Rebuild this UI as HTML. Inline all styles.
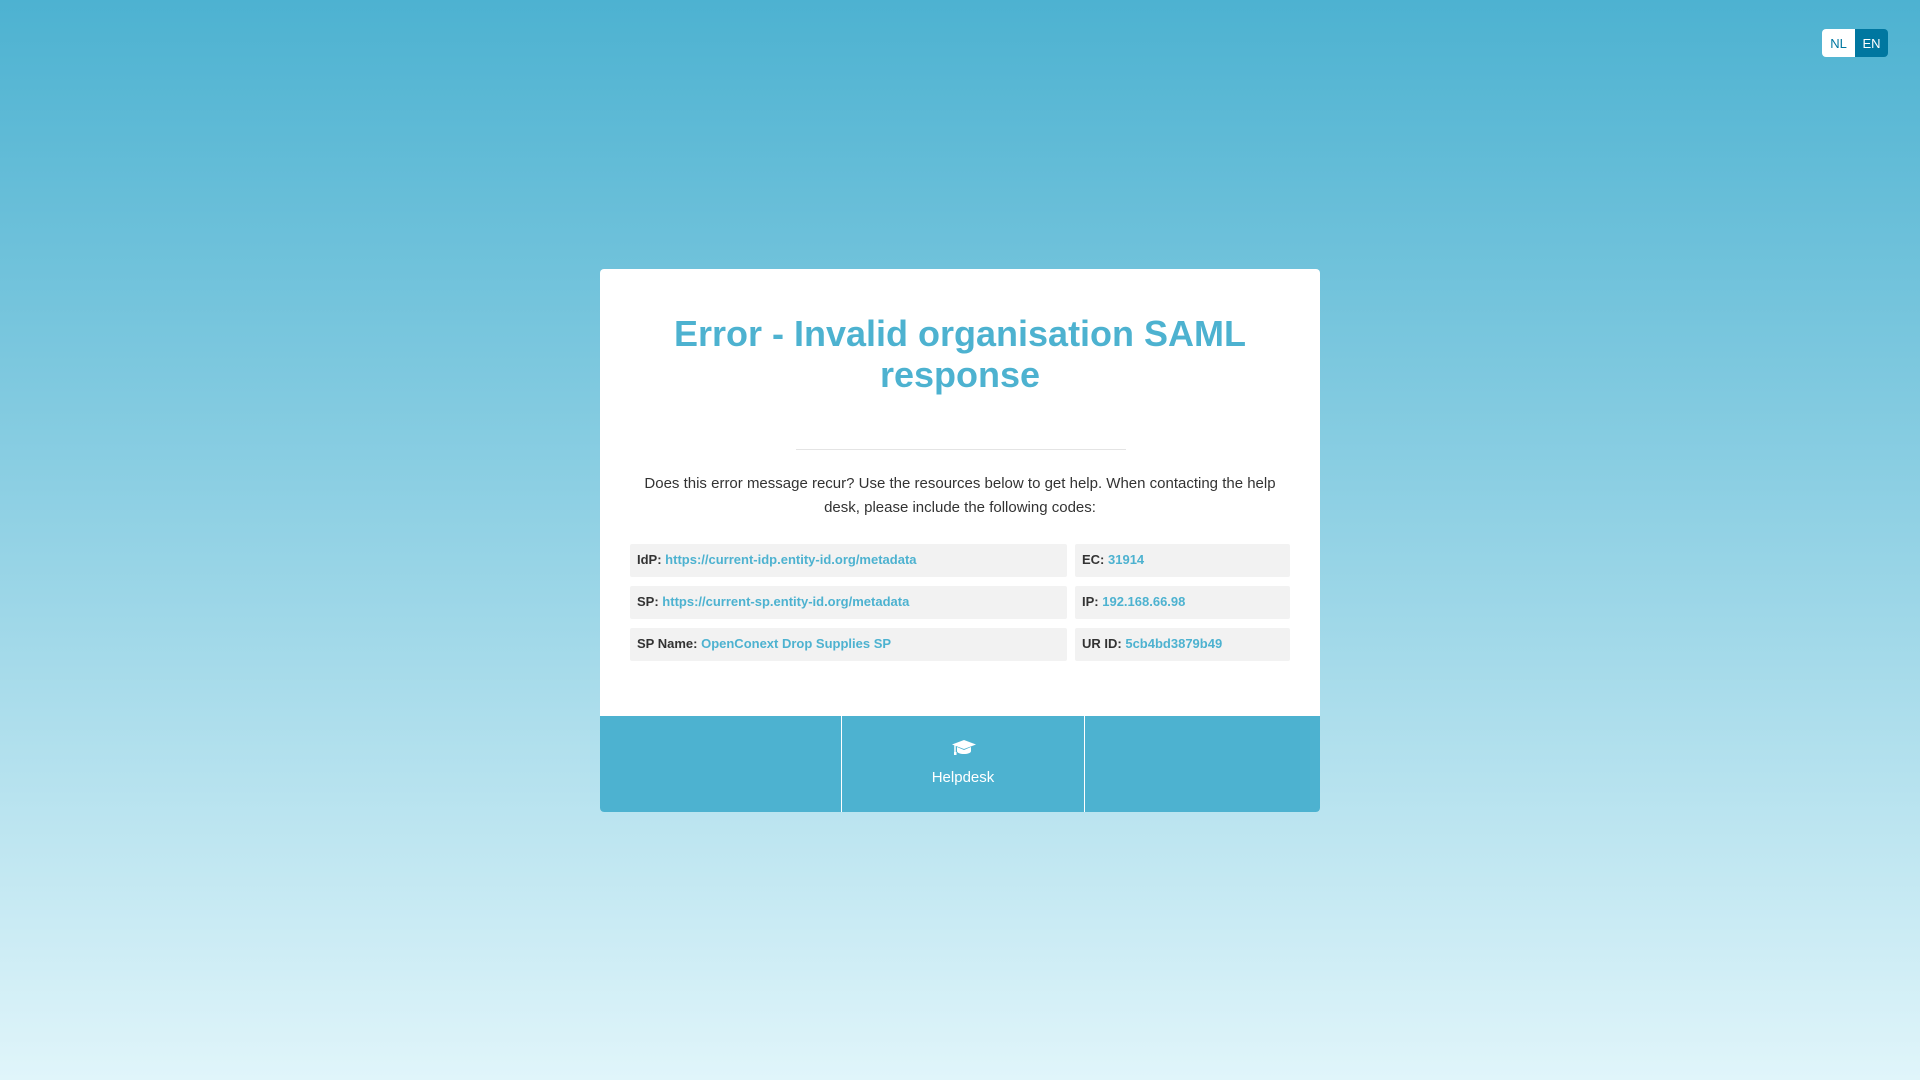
<!DOCTYPE html>
<html><head><meta charset="utf-8"><style>
*{box-sizing:border-box;margin:0;padding:0}
html,body{width:1920px;height:1080px;overflow:hidden}
body{font-family:"Liberation Sans",sans-serif;background:linear-gradient(180deg,#4db2d1 0%,#8ccfe3 45%,#e0f5fa 100%);position:relative}
.lang{position:absolute;top:29px;left:1822px;display:flex;font-size:13px;height:28px}
.lang span{width:33px;display:flex;align-items:center;justify-content:center}
.nl{background:#fff;color:#0077a0;border-radius:4px 0 0 4px}
.en{background:#0077a0;color:#fff;border-radius:0 4px 4px 0}
.card{position:absolute;left:600px;top:269px;width:720px;height:543px;background:#fff;border-radius:4px;overflow:hidden}
h1{color:#4db2d0;font-size:36px;font-weight:bold;text-align:center;line-height:41px;margin-top:44px}
.hr{position:absolute;left:196px;top:180px;width:330px;height:1px;background:#e4e4e4}
p{position:absolute;top:203px;left:30px;width:660px;text-align:center;font-size:15px;line-height:24px;color:#333}
.row{position:absolute;left:30px;height:33px;width:660px}
.c{position:absolute;top:0;height:33px;background:#f2f2f2;border-radius:2px;font-size:13px;font-weight:bold;color:#333;line-height:32px;padding-left:7px}
.c b{color:#4db2d0}
.foot{position:absolute;left:0;top:447px;width:720px;height:96px;background:#4db2d0;display:flex}
.foot div{border-left:1px solid #fff;position:relative}
.foot .h{color:#fff;font-size:15px;text-align:center;padding-top:53px}
</style></head><body>
<div class="lang"><span class="nl">NL</span><span class="en">EN</span></div>
<div class="card">
<h1>Error - Invalid organisation SAML<br>response</h1>
<div class="hr"></div>
<p>Does this error message recur? Use the resources below to get help. When contacting the help desk, please include the following codes:</p>
<div class="row" style="top:275px"><div class="c" style="left:0;width:437px">IdP: <b>https://current-idp.entity-id.org/metadata</b></div><div class="c" style="left:445px;width:215px">EC: <b>31914</b></div></div>
<div class="row" style="top:317px"><div class="c" style="left:0;width:437px">SP: <b>https://current-sp.entity-id.org/metadata</b></div><div class="c" style="left:445px;width:215px">IP: <b>192.168.66.98</b></div></div>
<div class="row" style="top:359px"><div class="c" style="left:0;width:437px">SP Name: <b>OpenConext Drop Supplies SP</b></div><div class="c" style="left:445px;width:215px">UR ID: <b>5cb4bd3879b49</b></div></div>
<div class="foot"><div style="width:241px;border-left:none"></div><div class="h" style="width:243px">
<svg style="position:absolute;left:110px;top:24px" width="24" height="16" viewBox="0 0 24 16"><path d="M12 0L24 4.5 12 9 0 4.5z" fill="#fff"/><path d="M5 7v4c0 2 3.5 3 7 3s7-1 7-3V7l-7 3z" fill="#fff"/><path d="M3 5.5v7" stroke="#fff" stroke-width="1.5"/><rect x="2" y="12" width="2.5" height="3" fill="#fff"/></svg>
Helpdesk</div><div style="width:236px"></div></div>
</div>
</body></html>
